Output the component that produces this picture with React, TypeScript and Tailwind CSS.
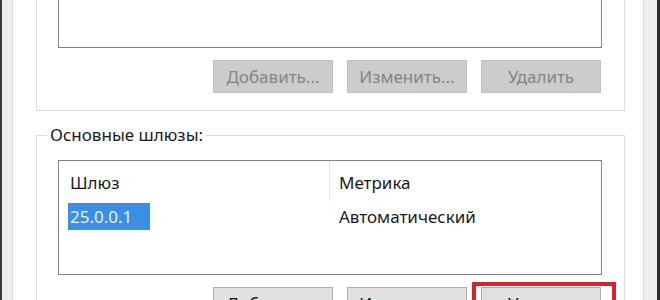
import type { ReactNode } from "react"

type BtnProps = { children: ReactNode; disabled?: boolean; marked?: boolean }

function DlgButton({ children, disabled, marked }: BtnProps) {
  return (
    <div className="relative">
      <button
        className={
          disabled
            ? "w-[120px] h-[33px] border border-[#bfbfbf] bg-[#cccccc] text-[#858585] text-[17px] leading-[22px]"
            : "w-[120px] h-[33px] border border-[#adadad] bg-[#e1e1e1] text-[#111111] text-[17px] leading-[22px]"
        }
      >
        {children}
      </button>
      {marked && (
        <div className="absolute -left-[9px] -right-[15px] -top-[5px] h-[60px] border-[4px] border-[#d4252c]" />
      )}
    </div>
  )
}

export default function App() {
  return (
    <div className="w-[660px] h-[300px] overflow-hidden flex bg-white font-['Noto_Sans','Open_Sans',sans-serif] text-[#1a1a1a]">
      {/* левая рамка окна */}
      <div className="w-[13px] shrink-0 border-l-2 border-l-[#3a3a3a] border-r border-r-[#d9d9d9] bg-[#eeeeee]" />

      <div className="flex-1 pl-[23px] pr-[18px]">
        {/* верхняя группа (IP-адреса) */}
        <div className="border-x border-b border-[#dcdcdc] pl-[21px] pr-[22px] pb-[17px]">
          <div className="h-[48px] border-x border-b border-[#828282] bg-white" />
          <div className="mt-[12px] flex justify-end gap-[14px] pr-[1px]">
            <DlgButton disabled>Добавить...</DlgButton>
            <DlgButton disabled>Изменить...</DlgButton>
            <DlgButton disabled>Удалить</DlgButton>
          </div>
        </div>

        {/* основные шлюзы */}
        <div className="mt-[24px] border border-[#dcdcdc] pl-[21px] pr-[22px] pb-[20px]">
          <div className="-mt-[12px] -ml-[11px] w-fit bg-white px-[3px] text-[17px] leading-[22px]">
            Основные шлюзы:
          </div>
          <div className="mt-[14px] h-[115px] border border-[#828282] bg-white text-[17px]">
            <div className="flex h-[40px]">
              <div className="w-[270px] pl-[11px] pt-[11px] leading-[22px]">Шлюз</div>
              <div className="border-l border-[#e5e5e5] pl-[9px] pt-[11px] leading-[22px]">Метрика</div>
            </div>
            <div className="mt-[2px] flex h-[27px]">
              <div className="w-[270px] pl-[9px]">
                <div className="w-[82px] h-[27px] bg-[#3b8fe3] px-[2px] leading-[27px] text-[#eaf4ff]">25.0.0.1</div>
              </div>
              <div className="pl-[10px] leading-[27px]">Автоматический</div>
            </div>
          </div>
          <div className="mt-[12px] flex justify-end gap-[14px] pr-[1px]">
            <DlgButton>Добавить...</DlgButton>
            <DlgButton>Изменить...</DlgButton>
            <DlgButton marked>Удалить</DlgButton>
          </div>
        </div>
      </div>

      {/* правая рамка окна */}
      <div className="w-[17px] shrink-0 border-l border-l-[#d9d9d9] border-r-[3px] border-r-[#2a2a2a] bg-[#eeeeee]" />
    </div>
  )
}
